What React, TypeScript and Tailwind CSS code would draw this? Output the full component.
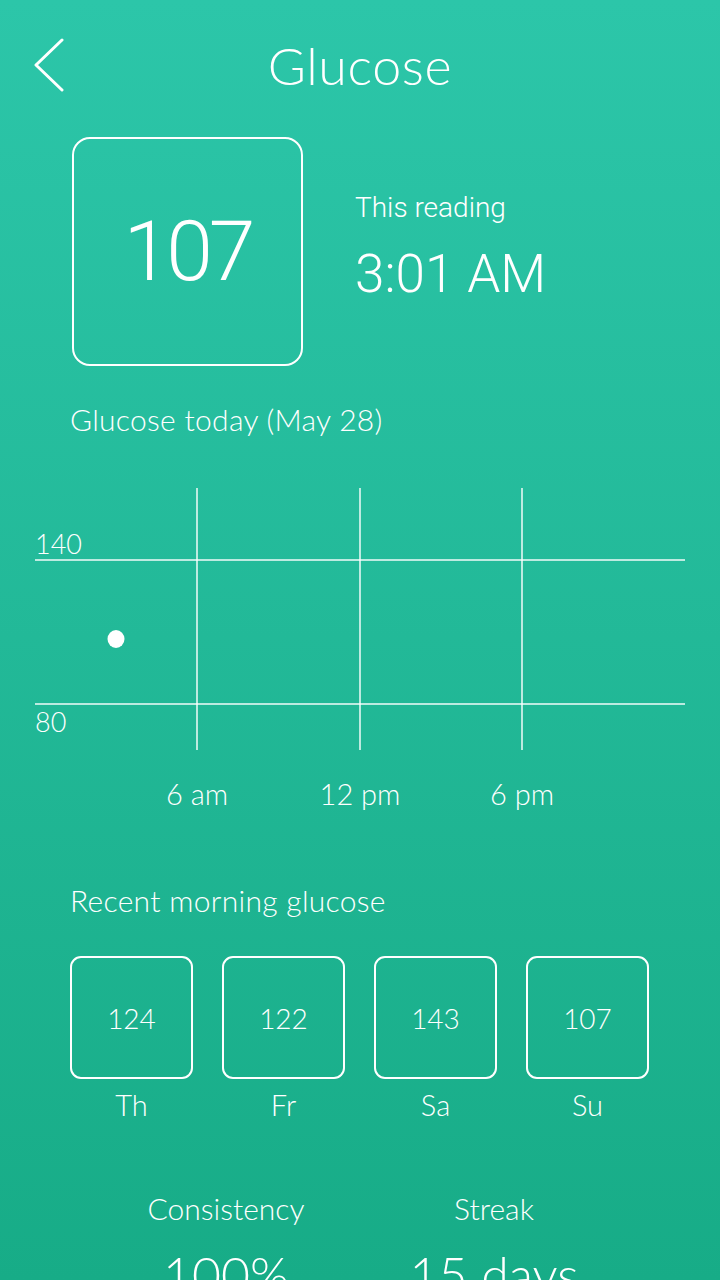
const avenir = { fontFamily: "Lato, 'Open Sans', sans-serif" };
const helvetica = { fontFamily: "Roboto, sans-serif", fontWeight: 300 };

const recent = [
  { value: 124, day: "Th" },
  { value: 122, day: "Fr" },
  { value: 143, day: "Sa" },
  { value: 107, day: "Su" },
];

function Chart() {
  return (
    <div className="relative h-[340px] w-[720px]">
      <svg width="720" height="300" className="absolute left-0 top-0">
        {/* grid */}
        <line x1="35" y1="90" x2="685" y2="90" stroke="rgba(255,255,255,0.7)" strokeWidth="2" />
        <line x1="35" y1="234" x2="685" y2="234" stroke="rgba(255,255,255,0.7)" strokeWidth="2" />
        <line x1="197" y1="18" x2="197" y2="280" stroke="rgba(255,255,255,0.7)" strokeWidth="2" />
        <line x1="360" y1="18" x2="360" y2="280" stroke="rgba(255,255,255,0.7)" strokeWidth="2" />
        <line x1="522" y1="18" x2="522" y2="280" stroke="rgba(255,255,255,0.7)" strokeWidth="2" />
        <ellipse cx="116" cy="169" rx="8.5" ry="9" fill="white" />
      </svg>
      <span className="absolute left-[35px] top-[60px] text-[27px] leading-none font-light text-white">
        140
      </span>
      <span className="absolute left-[35px] top-[238px] text-[27px] leading-none font-light text-white">
        80
      </span>
      <div className="absolute left-0 top-[309px] w-full text-[29px] leading-none font-light text-white">
        <span className="absolute left-[197px] -translate-x-1/2 whitespace-nowrap">6 am</span>
        <span className="absolute left-[360px] -translate-x-1/2 whitespace-nowrap">12 pm</span>
        <span className="absolute left-[522px] -translate-x-1/2 whitespace-nowrap">6 pm</span>
      </div>
    </div>
  );
}

export default function App() {
  return (
    <div
      className="h-[1280px] w-[720px] overflow-hidden bg-gradient-to-b from-[#2cc6a9] to-[#17ac87] text-white"
      style={avenir}
    >
      {/* Header */}
      <div className="relative flex h-[130px] items-center justify-center">
        <svg width="32" height="54" viewBox="0 0 32 54" className="absolute left-[33px] top-[38px]">
          <polyline points="29,2 3,27 29,52" fill="none" stroke="white" strokeWidth="3" strokeLinecap="round" strokeLinejoin="round" />
        </svg>
        <h1 className="text-[52px] font-light leading-none tracking-[0.6px]">Glucose</h1>
      </div>

      {/* Current reading */}
      <div className="mt-[7px] flex items-start pl-[72px]">
        <div className="flex h-[229px] w-[231px] items-center justify-center rounded-[18px] border-2 border-white">
          <span className="text-[84px] leading-none tracking-[-4px]" style={helvetica}>
            107
          </span>
        </div>
        <div className="ml-[52px] mt-[57px] flex flex-col" style={helvetica}>
          <span className="text-[28px] leading-none">This reading</span>
          <span className="mt-[26px] text-[53px] leading-none">3:01 AM</span>
        </div>
      </div>

      {/* Today chart */}
      <div className="mt-[38px] pl-[70px] text-[30px] font-light leading-none tracking-[0.3px]">
        Glucose today (May 28)
      </div>
      <div className="mt-[36px]">
        <Chart />
      </div>

      {/* Recent */}
      <div className="mt-[75px] pl-[70px] text-[30px] font-light leading-none tracking-[0.3px]">
        Recent morning glucose
      </div>
      <div className="mt-[41px] flex gap-[29px] pl-[70px]">
        {recent.map((r) => (
          <div key={r.day} className="flex w-[123px] flex-col items-center">
            <div className="flex h-[123px] w-[123px] items-center justify-center rounded-[11px] border-2 border-white">
              <span className="text-[28px] font-light leading-none">{r.value}</span>
            </div>
            <span className="mt-[11px] text-[29px] font-light leading-none">{r.day}</span>
          </div>
        ))}
      </div>

      {/* Stats */}
      <div className="mt-[74px] flex pl-[92px]">
        <div className="flex w-[268px] flex-col items-center">
          <span className="text-[30px] font-light leading-none">Consistency</span>
          <span className="mt-[26px] text-[50px] font-light leading-none">100%</span>
        </div>
        <div className="flex w-[268px] flex-col items-center">
          <span className="text-[30px] font-light leading-none">Streak</span>
          <span className="mt-[26px] whitespace-nowrap text-[50px] font-light leading-none">15 days</span>
        </div>
      </div>
    </div>
  );
}
